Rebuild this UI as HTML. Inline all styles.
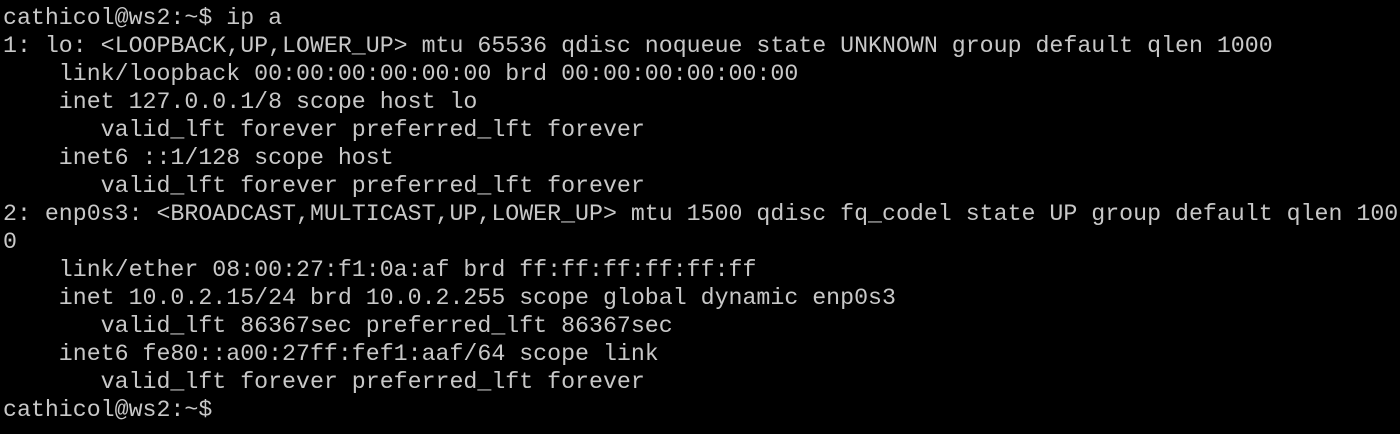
<!DOCTYPE html>
<html><head><meta charset="utf-8"><style>
html,body{margin:0;padding:0;background:#000;width:1400px;height:434px;overflow:hidden}
pre{margin:0;padding:4px 0 0 3px;font-family:"Liberation Mono",monospace;font-size:23.25px;line-height:28px;color:#c8c8c8;white-space:pre}
</style></head><body><pre>cathicol@ws2:~$ ip a
1: lo: &lt;LOOPBACK,UP,LOWER_UP&gt; mtu 65536 qdisc noqueue state UNKNOWN group default qlen 1000
    link/loopback 00:00:00:00:00:00 brd 00:00:00:00:00:00
    inet 127.0.0.1/8 scope host lo
       valid_lft forever preferred_lft forever
    inet6 ::1/128 scope host
       valid_lft forever preferred_lft forever
2: enp0s3: &lt;BROADCAST,MULTICAST,UP,LOWER_UP&gt; mtu 1500 qdisc fq_codel state UP group default qlen 100
0
    link/ether 08:00:27:f1:0a:af brd ff:ff:ff:ff:ff:ff
    inet 10.0.2.15/24 brd 10.0.2.255 scope global dynamic enp0s3
       valid_lft 86367sec preferred_lft 86367sec
    inet6 fe80::a00:27ff:fef1:aaf/64 scope link
       valid_lft forever preferred_lft forever
cathicol@ws2:~$</pre></body></html>
